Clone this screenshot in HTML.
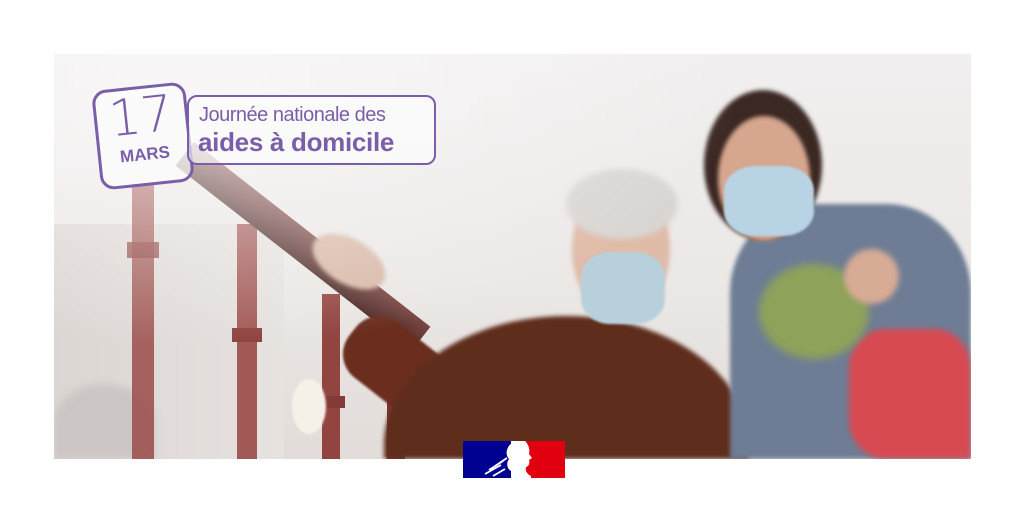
<!DOCTYPE html>
<html><head><meta charset="utf-8"><style>
*{margin:0;padding:0;box-sizing:border-box}
html,body{width:1025px;height:513px;overflow:hidden}
body{background:#fff;position:relative;font-family:"Liberation Sans",sans-serif}
.photo{position:absolute;left:54px;top:54px;width:917px;height:405px;overflow:hidden;
background:linear-gradient(180deg,#f1efef 0%,#ebe8e6 55%,#e2dcd9 100%)}
.b{position:absolute;border-radius:50%;filter:blur(6px)}
.r{position:absolute}
.badge{position:absolute;left:96px;top:86px;width:94px;height:100px;border:3px solid #7a5fa8;border-radius:14px;background:rgba(255,255,255,.6);transform:rotate(-6deg);color:#7a5fa8;text-align:center}
.banner{position:absolute;left:187px;top:95px;width:249px;height:70px;border:2px solid #7a5fa8;border-radius:10px;background:rgba(255,255,255,.6);color:#7a5fa8}
</style></head><body>
<div class="photo">
 <div class="r" style="left:0;top:170px;width:230px;height:235px;background:linear-gradient(90deg,#dcd6d3,#e6e2df)"></div>
 <div class="b" style="left:0;top:330px;width:100px;height:75px;background:#cbc6c3;border-radius:50% 50% 0 0;filter:blur(4px)"></div>
 <div class="r" style="left:78px;top:130px;width:22px;height:275px;background:#9a4b48;opacity:.85"></div>
 <div class="r" style="left:73px;top:188px;width:32px;height:16px;background:#8e4340;opacity:.85"></div>
 <div class="r" style="left:183px;top:170px;width:20px;height:235px;background:#9a4a47;opacity:.9"></div>
 <div class="r" style="left:178px;top:274px;width:30px;height:14px;background:#8e4340"></div>
 <div class="r" style="left:268px;top:240px;width:18px;height:165px;background:#924441"></div>
 <div class="r" style="left:263px;top:342px;width:28px;height:12px;background:#843b38"></div>
 <div class="r" style="left:333px;top:300px;width:18px;height:105px;background:#7e3431"></div>
 <div class="b" style="left:238px;top:325px;width:34px;height:55px;background:#f6f1e8;filter:blur(1px)"></div>
 <div class="r" style="left:140px;top:88px;width:300px;height:30px;background:linear-gradient(180deg,#7a4744,#4e2b28);transform:rotate(38deg);transform-origin:left top"></div>
 <div class="b" style="left:255px;top:185px;width:80px;height:45px;background:#d9b8a6;filter:blur(2px);transform:rotate(30deg)"></div>
 <div class="r" style="left:320px;top:250px;width:140px;height:70px;background:#6b2e1e;border-radius:30px;transform:rotate(38deg);transform-origin:left top;filter:blur(1px)"></div>
 <div class="b" style="left:330px;top:262px;width:365px;height:143px;background:#5f2d1c;border-radius:50% 50% 0 0/90% 90% 0 0;filter:blur(2px)"></div>
 <div class="b" style="left:518px;top:125px;width:98px;height:140px;background:#e0bba8;filter:blur(2px)"></div>
 <div class="b" style="left:512px;top:115px;width:112px;height:70px;background:#d8d5d2;filter:blur(3px)"></div>
 <div class="b" style="left:527px;top:198px;width:84px;height:72px;background:#b8d0dc;border-radius:35%;filter:blur(1px)"></div>
 <div class="b" style="left:676px;top:150px;width:241px;height:255px;background:#6e7d95;border-radius:35% 35% 0 0;filter:blur(2px)"></div>
 <div class="b" style="left:650px;top:36px;width:118px;height:150px;background:#3b2822;filter:blur(2px)"></div>
 <div class="b" style="left:664px;top:62px;width:92px;height:125px;background:#d6a68e;filter:blur(2px)"></div>
 <div class="b" style="left:670px;top:112px;width:90px;height:70px;background:#b8d3e4;border-radius:35%;filter:blur(1px)"></div>
 <div class="b" style="left:795px;top:275px;width:122px;height:130px;background:#d84a52;border-radius:30% 30% 0 30%;filter:blur(3px)"></div>
 <div class="b" style="left:705px;top:210px;width:110px;height:95px;background:#8ea25a;filter:blur(4px)"></div>
 <div class="b" style="left:790px;top:195px;width:55px;height:55px;background:#d8ab95;filter:blur(3px)"></div>
 <div class="r" style="left:0;top:0;width:917px;height:405px;background:radial-gradient(ellipse at 15% 5%,rgba(250,248,248,.85),rgba(250,248,248,0) 50%)"></div>
</div>
<div class="badge"><div style="font-size:50px;line-height:50px;margin-top:2px;font-family:'DejaVu Sans','Liberation Sans',sans-serif;font-weight:200">17</div><div style="font-size:17px;font-weight:bold;line-height:20px;margin-top:4px">MARS</div></div>
<div class="banner"><div style="font-size:20px;line-height:24px;margin:6px 0 0 10px;letter-spacing:-.5px">Journée nationale des</div><div style="font-size:26px;font-weight:bold;line-height:30px;margin-left:9px;letter-spacing:-.3px">aides à domicile</div></div>
<svg style="position:absolute;left:463px;top:441px" width="102" height="37" viewBox="0 0 102 37">
<rect width="102" height="37" fill="#fff"/>
<rect width="48" height="37" fill="#000091"/><rect x="60" width="42" height="37" fill="#e1000f"/>
<path d="M48 37 L48 30 C44 28 43 22 46 18 C42 14 43 6 49 2 L52 0 L62 0 C66 4 67 9 66 13 L69 17 L66 19 C67 22 66 25 63 26 C62 30 64 33 68 35 L68 37Z" fill="#fff"/>
<path d="M22 33 L38 24 M26 29 L40 20 M30 35 L42 28 M32 25 L44 17" stroke="#fff" stroke-width="1.8"/>
</svg>
</body></html>
